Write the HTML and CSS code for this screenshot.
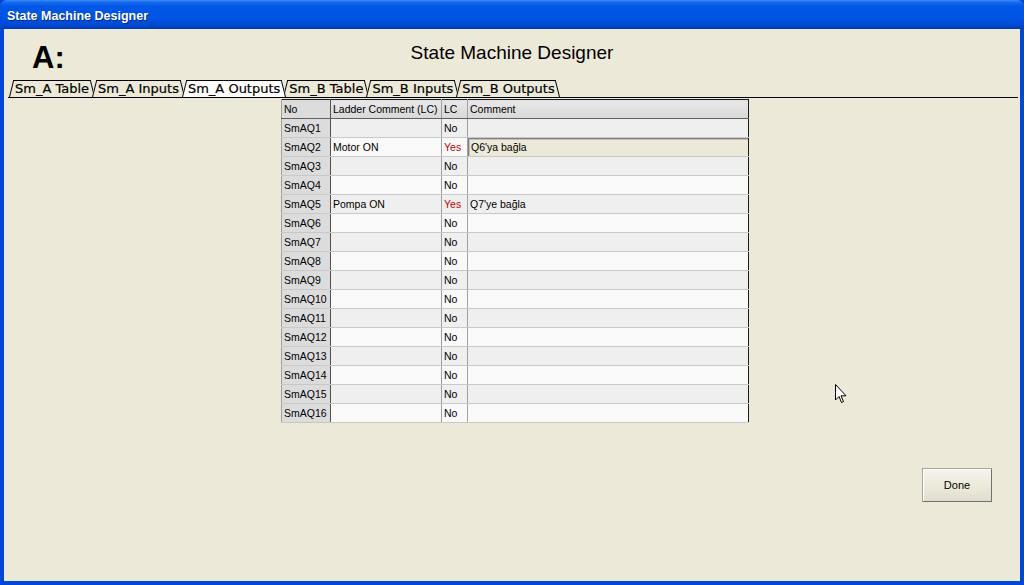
FILE: index.html
```html
<!DOCTYPE html>
<html>
<head>
<meta charset="utf-8">
<link rel="stylesheet" href="styles.css">
</head>
<body>
<div class="window">
  <div class="titlebar">State Machine Designer</div>
  <div class="client">
    <div class="header">
      <div class="drive">A:</div>
      <div class="apptitle">State Machine Designer</div>
      <div></div>
    </div>
    <div class="tabs">
      <div class="tab">Sm_A Table</div>
      <div class="tab">Sm_A Inputs</div>
      <div class="tab active">Sm_A Outputs</div>
      <div class="tab">Sm_B Table</div>
      <div class="tab">Sm_B Inputs</div>
      <div class="tab">Sm_B Outputs</div>
    </div>
    <div class="content">
      <table class="grid">
        <thead>
          <tr><th class="c-no">No</th><th class="c-lad">Ladder Comment (LC)</th><th class="c-lc">LC</th><th class="c-com">Comment</th></tr>
        </thead>
        <tbody>
          <tr><td class="no">SmAQ1</td><td></td><td>No</td><td></td></tr>
          <tr><td class="no">SmAQ2</td><td>Motor ON</td><td class="yes">Yes</td><td class="edit">Q6'ya bağla</td></tr>
          <tr><td class="no">SmAQ3</td><td></td><td>No</td><td></td></tr>
          <tr><td class="no">SmAQ4</td><td></td><td>No</td><td></td></tr>
          <tr><td class="no">SmAQ5</td><td>Pompa ON</td><td class="yes">Yes</td><td>Q7'ye bağla</td></tr>
          <tr><td class="no">SmAQ6</td><td></td><td>No</td><td></td></tr>
          <tr><td class="no">SmAQ7</td><td></td><td>No</td><td></td></tr>
          <tr><td class="no">SmAQ8</td><td></td><td>No</td><td></td></tr>
          <tr><td class="no">SmAQ9</td><td></td><td>No</td><td></td></tr>
          <tr><td class="no">SmAQ10</td><td></td><td>No</td><td></td></tr>
          <tr><td class="no">SmAQ11</td><td></td><td>No</td><td></td></tr>
          <tr><td class="no">SmAQ12</td><td></td><td>No</td><td></td></tr>
          <tr><td class="no">SmAQ13</td><td></td><td>No</td><td></td></tr>
          <tr><td class="no">SmAQ14</td><td></td><td>No</td><td></td></tr>
          <tr><td class="no">SmAQ15</td><td></td><td>No</td><td></td></tr>
          <tr><td class="no">SmAQ16</td><td></td><td>No</td><td></td></tr>
        </tbody>
      </table>
    </div>
    <div class="footer">
      <button class="btn">Done</button>
    </div>
  </div>
  <svg class="cursor" width="12" height="20" viewBox="0 0 12 20"><path d="M0.5 0.5 L0.5 16 L4 12.5 L6.5 18.5 L8.5 17.6 L6 11.8 L11 11.8 Z" fill="#fff" stroke="#000" stroke-width="1"/></svg>
</div>
</body>
</html>
```
FILE: styles.css
```css
html, body {
  margin: 0;
  padding: 0;
}
body {
  width: 1024px;
  height: 585px;
  overflow: hidden;
  font-family: "Liberation Sans", Arial, sans-serif;
}
.window {
  position: relative;
  width: 1024px;
  height: 585px;
  display: flex;
  flex-direction: column;
  background: #0049d8;
}
.titlebar {
  height: 29px;
  box-sizing: border-box;
  padding: 9px 0 0 7px;
  color: #fff;
  font-family: "Liberation Sans", Arial, sans-serif;
  font-weight: bold;
  font-size: 12.5px;
  background: linear-gradient(#3d8ef8 0, #1a6cf0 2px, #0058e6 6px, #0054e3 18px, #004bd6 24px, #003fbf 28px, #0039b0 29px);
  border-radius: 7px 7px 0 0;
  text-shadow: 1px 1px 0 #0a2a80;
}
.client {
  flex: 1;
  margin: 0 4px 4px 4px;
  background: #ece9d8;
  display: flex;
  flex-direction: column;
}
.header {
  height: 51px;
  display: grid;
  grid-template-columns: 1fr auto 1fr;
  align-items: start;
}
.drive {
  padding: 12px 0 0 28px;
  font-size: 31px;
  font-weight: bold;
  line-height: 34px;
  color: #000;
}
.apptitle {
  padding-top: 14px;
  font-size: 19px;
  line-height: 20px;
  color: #000;
}
.tabs {
  display: flex;
  height: 17px;
  margin: 0 2px 0 4px;
  border-bottom: 1px solid #000;
  padding-left: 1px;
}
.tab {
  position: relative;
  isolation: isolate;
  height: 17px;
  line-height: 18px;
  padding: 0 6px 0 6px;
  margin-right: -3px;
  font-family: "DejaVu Sans", sans-serif;
  font-size: 13px;
  color: #000;
  white-space: nowrap;
  -webkit-text-stroke: 0.2px #000;
}
.tab::before, .tab::after {
  content: "";
  position: absolute;
  top: 0;
  bottom: 0;
  width: 55%;
  border-top: 1px solid #000;
  background: #ece9d8;
  z-index: -1;
}
.tab::before {
  left: 0;
  border-left: 1px solid #000;
  transform-origin: bottom left;
  transform: skewX(-14deg);
}
.tab::after {
  right: 0;
  border-right: 1px solid #000;
  transform-origin: bottom right;
  transform: skewX(14deg);
}
.tab.active {
  z-index: 2;
}
.tab.active::before, .tab.active::after {
  background: #fff;
}
.content {
  padding: 1px 0 0 277px;
}
.grid {
  border-collapse: collapse;
  border: 1px solid #1a1a1a;
  font-size: 10.5px;
  color: #000;
  table-layout: fixed;
  width: 468px;
}
.grid th, .grid td {
  height: 18px;
  padding: 0 0 0 2px;
  text-align: left;
  font-weight: normal;
  border-left: 1px solid #a0a0a0;
  border-bottom: 1px solid #c8c8c8;
  white-space: nowrap;
  overflow: hidden;
  line-height: 18px;
}
.grid th {
  background: linear-gradient(#e8e8e8, #d8d8d8);
  border-bottom: 1px solid #606060;
}
.c-no { width: 46px; }
.c-lad { width: 108px; }
.c-lc { width: 23px; }
.grid td.no, .grid th.c-no {
  background: #dcdcdc;
  border-right: 1px solid #505050;
}
.grid tbody tr:nth-child(odd) td {
  background: #efefef;
}
.grid tbody tr:nth-child(even) td {
  background: #f9f9f9;
}
.grid tbody tr td.no {
  background: #dcdcdc;
}
.grid td.yes {
  color: #c00000;
}
.grid tbody tr td.edit {
  background: #ece9d8;
  box-shadow: inset 1px 1px 0 #808080, inset 2px 2px 0 #c0c0c0;
  padding-left: 3px;
}
.footer {
  flex: 1;
  display: flex;
  justify-content: flex-end;
  align-items: flex-start;
  padding: 45px 28px 0 0;
}
.btn {
  width: 70px;
  height: 34px;
  font-family: "Liberation Sans", Arial, sans-serif;
  font-size: 11px;
  color: #000;
  background: linear-gradient(#f4f3ee, #ece9d8 60%, #e0ddd0);
  border: 1px solid #a8a69a;
  border-right-color: #707070;
  border-bottom-color: #707070;
  border-radius: 1px;
  box-shadow: inset 1px 1px 0 #fff;
  padding: 0;
}
.cursor {
  position: absolute;
  left: 835px;
  top: 384px;
}
```
